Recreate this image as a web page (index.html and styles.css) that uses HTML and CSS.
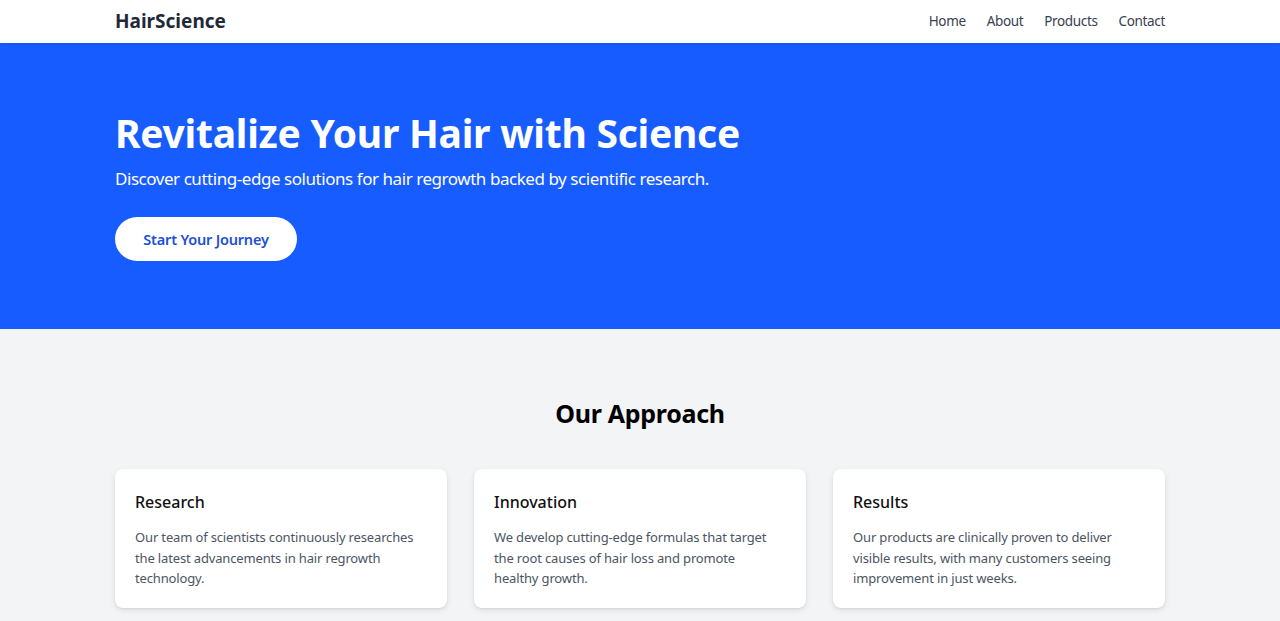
FILE: index.html
```html
<!DOCTYPE html>
<html lang="en">
<head>
<meta charset="utf-8">
<title>HairScience</title>
<link rel="stylesheet" href="styles.css">
</head>
<body>
<header class="nav">
  <div class="container nav-inner">
    <a class="logo" href="#">HairScience</a>
    <nav class="links">
      <a href="#">Home</a>
      <a href="#">About</a>
      <a href="#">Products</a>
      <a href="#">Contact</a>
    </nav>
  </div>
</header>
<section class="hero">
  <div class="container">
    <h1>Revitalize Your Hair with Science</h1>
    <p>Discover cutting-edge solutions for hair regrowth backed by scientific research.</p>
    <a class="btn" href="#">Start Your Journey</a>
  </div>
</section>
<section class="approach">
  <div class="container">
    <h2>Our Approach</h2>
    <div class="cards">
      <div class="card">
        <h3>Research</h3>
        <p>Our team of scientists continuously researches the latest advancements in hair regrowth technology.</p>
      </div>
      <div class="card">
        <h3>Innovation</h3>
        <p>We develop cutting-edge formulas that target the root causes of hair loss and promote healthy growth.</p>
      </div>
      <div class="card">
        <h3>Results</h3>
        <p>Our products are clinically proven to deliver visible results, with many customers seeing improvement in just weeks.</p>
      </div>
    </div>
  </div>
</section>
</body>
</html>
```
FILE: styles.css
```css
* { box-sizing: border-box; }
html, body { margin: 0; padding: 0; }
body {
  font-family: "Noto Sans", "Open Sans", sans-serif;
  background: #f3f4f6;
  color: #111827;
}
a { text-decoration: none; color: inherit; }
.container { width: 1050px; margin: 0 auto; }

.nav {
  background: #fff;
  height: 43px;
  box-shadow: 0 1px 3px rgba(0,0,0,0.1);
  position: relative;
  z-index: 1;
}
.nav-inner {
  height: 41px;
  display: flex;
  align-items: center;
  justify-content: space-between;
}
.logo {
  font-size: 19px;
  font-weight: 700;
  color: #1f2937;
}
.links { display: flex; gap: 21px; }
.links a { font-size: 13.5px; letter-spacing: -0.35px; color: #374151; }

.hero {
  background: #175cff;
  color: #fff;
  height: 286px;
  padding-top: 64px;
}
.hero h1 {
  margin: 0;
  font-size: 39px;
  letter-spacing: -0.25px;
  line-height: 52px;
  font-weight: 700;
}
.hero p {
  margin: 7px 0 0;
  font-size: 17px;
  letter-spacing: -0.45px;
  line-height: 26px;
}
.btn {
  display: inline-flex;
  align-items: center;
  justify-content: center;
  margin-top: 25px;
  width: 182px;
  height: 44px;
  border-radius: 22px;
  background: #fff;
  color: #1d4ed8;
  font-weight: 600;
  font-size: 14.5px;
  letter-spacing: -0.2px;
}

.approach { padding: 66px 0 40px; }
.approach h2 {
  margin: 0;
  text-align: center;
  font-size: 25px;
  letter-spacing: -0.3px;
  line-height: 36px;
  font-weight: 700;
  color: #000;
}
.cards {
  margin-top: 38px;
  display: grid;
  grid-template-columns: repeat(3, 1fr);
  gap: 27px;
}
.card {
  background: #fff;
  border-radius: 8px;
  box-shadow: 0 2px 6px rgba(0,0,0,0.1), 0 1px 2px rgba(0,0,0,0.06);
  padding: 20px 26px 19px 20px;
  height: 139px;
}
.card h3 {
  margin: 0;
  font-size: 16px;
  line-height: 26px;
  font-weight: 500;
  color: #111;
}
.card p {
  margin: 12px 0 0;
  font-size: 13px;
  letter-spacing: -0.15px;
  line-height: 20.5px;
  color: #4b5563;
}
```
